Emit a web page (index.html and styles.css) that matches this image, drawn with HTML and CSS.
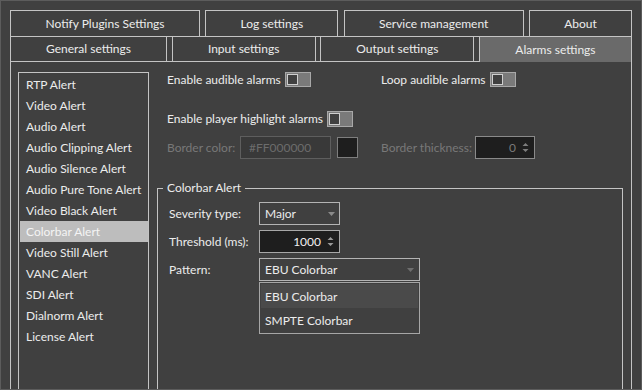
FILE: index.html
```html
<!DOCTYPE html>
<html>
<head>
<meta charset="utf-8">
<link rel="stylesheet" href="styles.css">
</head>
<body>
<div class="window">
  <div class="tabs row1">
    <div class="tab">Notify Plugins Settings</div>
    <div class="tab">Log settings</div>
    <div class="tab">Service management</div>
    <div class="tab">About</div>
  </div>
  <div class="tabs row2">
    <div class="tab">General settings</div>
    <div class="tab">Input settings</div>
    <div class="tab">Output settings</div>
    <div class="tab selected">Alarms settings</div>
  </div>
  <div class="panel">
    <ul class="alert-list">
      <li>RTP Alert</li>
      <li>Video Alert</li>
      <li>Audio Alert</li>
      <li>Audio Clipping Alert</li>
      <li>Audio Silence Alert</li>
      <li>Audio Pure Tone Alert</li>
      <li>Video Black Alert</li>
      <li class="active">Colorbar Alert</li>
      <li>Video Still Alert</li>
      <li>VANC Alert</li>
      <li>SDI Alert</li>
      <li>Dialnorm Alert</li>
      <li>License Alert</li>
    </ul>
    <div class="content">
      <div class="opts">
        <div class="opt row-a">
          <span>Enable audible alarms</span>
          <span class="toggle"><span class="knob"></span></span>
        </div>
        <div class="opt row-a">
          <span>Loop audible alarms</span>
          <span class="toggle"><span class="knob"></span></span>
        </div>
        <div class="opt row-b">
          <span>Enable player highlight alarms</span>
          <span class="toggle"><span class="knob"></span></span>
        </div>
        <div class="opt row-b"></div>
        <div class="opt row-c disabled">
          <span class="lbl-bc">Border color:</span>
          <span class="color-input">#FF000000</span>
          <span class="swatch"></span>
        </div>
        <div class="opt row-c disabled">
          <span class="lbl-bt">Border thickness:</span>
          <span class="spin spin-bt"><span class="val">0</span>
            <svg class="arrows" width="7" height="11" viewBox="0 0 7 11"><path d="M0.5 4 L3.5 1 L6.5 4 Z M0.5 7 L3.5 10 L6.5 7 Z" fill="#7d7d7d"/></svg>
          </span>
        </div>
      </div>
      <fieldset class="group">
        <legend>Colorbar Alert</legend>
        <div class="field">
          <span class="flabel">Severity type:</span>
          <span class="combo combo-sm"><span>Major</span>
            <svg class="caret" width="7" height="4" viewBox="0 0 7 4"><path d="M0 0 L7 0 L3.5 4 Z" fill="#8a8a8a"/></svg>
          </span>
        </div>
        <div class="field">
          <span class="flabel">Threshold (ms):</span>
          <span class="spin spin-th"><span class="val">1000</span>
            <svg class="arrows" width="7" height="11" viewBox="0 0 7 11"><path d="M0.5 4 L3.5 1 L6.5 4 Z M0.5 7 L3.5 10 L6.5 7 Z" fill="#9a9a9a"/></svg>
          </span>
        </div>
        <div class="field">
          <span class="flabel">Pattern:</span>
          <span class="combo combo-lg"><span>EBU Colorbar</span>
            <svg class="caret" width="7" height="4" viewBox="0 0 7 4"><path d="M0 0 L7 0 L3.5 4 Z" fill="#6e6e6e"/></svg>
            <ul class="popup">
              <li class="hover">EBU Colorbar</li>
              <li>SMPTE Colorbar</li>
            </ul>
          </span>
        </div>
      </fieldset>
    </div>
  </div>
</div>
</body>
</html>
```
FILE: styles.css
```css
html, body {
  margin: 0;
  padding: 0;
  background: #404040;
}
body {
  font-family: "Lato", "Liberation Sans", sans-serif;
  font-size: 12px;
  line-height: 16px;
  color: #ececec;
}
.window {
  width: 642px;
  height: 390px;
  box-sizing: border-box;
  border: 1px solid #5c5c5c;
  background: #404040;
  padding: 9px 9px 0 9px;
  overflow: hidden;
  display: flex;
  flex-direction: column;
}
.tabs {
  display: grid;
  justify-content: space-between;
}
.row1 {
  grid-template-columns: 190px 133px 180px 103px;
}
.row2 {
  grid-template-columns: 157px 144px 154px 153px;
  margin-top: -1px;
  height: 25px;
  align-items: start;
}
.tab {
  box-sizing: border-box;
  border: 1px solid #c4c4c4;
  display: flex;
  align-items: center;
  justify-content: center;
  background: #404040;
}
.row1 .tab {
  height: 27px;
}
.row2 .tab {
  height: 25px;
  border-bottom: none;
}
.row2 .tab.selected {
  height: 26px;
  background: #6a6a6a;
  position: relative;
  z-index: 2;
}
.panel {
  flex: 1;
  border: 1px solid #c4c4c4;
  border-bottom: none;
  display: flex;
  padding: 10px 8px 0 7px;
  min-height: 0;
}
.alert-list {
  list-style: none;
  margin: 0;
  padding: 1px 0 0 0;
  width: 131px;
  box-sizing: border-box;
  border: 1px solid #c4c4c4;
  border-bottom: none;
  flex: none;
}
.alert-list li {
  height: 21px;
  line-height: 21px;
  margin-left: 1px;
  padding-left: 6px;
  white-space: nowrap;
}
.alert-list li.active {
  background: #bdbdbd;
  color: #f4f4f4;
}
.content {
  margin-left: 8px;
  flex: 1;
  display: flex;
  flex-direction: column;
}
.opts {
  display: grid;
  grid-template-columns: 214px 1fr;
  padding-left: 10px;
}
.opt {
  display: flex;
  align-items: center;
  white-space: nowrap;
}
.row-a {
  height: 15px;
}
.row-b {
  height: 16px;
  margin-top: 24px;
}
.row-c {
  height: 23px;
  margin-top: 9px;
}
.toggle {
  width: 26px;
  height: 15px;
  box-sizing: border-box;
  border: 1px solid #a8a8a8;
  background: #7a7a7a;
  margin-left: 4px;
  padding: 1px;
  display: flex;
}
.row-b .toggle {
  height: 16px;
}
.knob {
  width: 11px;
  height: 100%;
  box-sizing: border-box;
  border: 1px solid #cfcfcf;
  background: #404040;
}
.disabled {
  color: #787878;
}
.lbl-bc {
  width: 73px;
}
.color-input {
  width: 91px;
  height: 23px;
  box-sizing: border-box;
  border: 1px solid #5e5e5e;
  background: #393939;
  color: #6c6c6c;
  padding-left: 8px;
  display: flex;
  align-items: center;
}
.swatch {
  width: 21px;
  height: 21px;
  box-sizing: border-box;
  border: 1px solid #7e7e7e;
  background: #1e1e1e;
  margin-left: 6px;
}
.lbl-bt {
  width: 94px;
}
.spin {
  height: 23px;
  box-sizing: border-box;
  border: 1px solid #a8a8a8;
  background: #1e1e1e;
  display: flex;
  align-items: center;
  justify-content: flex-end;
  color: #f0f0f0;
}
.spin .val {
  margin-right: 6px;
}
.spin .arrows {
  margin-right: 5px;
}
.spin-bt {
  width: 60px;
  border-color: #8a8a8a;
  color: #7a7a7a;
}
.spin-th {
  width: 81px;
}
.group {
  margin: 21px 0 0 0;
  padding: 6px 0 0 11px;
  border: 1px solid #c4c4c4;
  border-bottom: none;
  flex: 1;
  min-width: 0;
}
.group legend {
  padding: 0 4px 0 4px;
  margin-left: -6px;
  line-height: 16px;
  color: #ececec;
}
.field {
  display: flex;
  align-items: center;
  height: 23px;
  margin-bottom: 5px;
}
.flabel {
  width: 90px;
  white-space: nowrap;
}
.combo {
  position: relative;
  height: 23px;
  box-sizing: border-box;
  border: 1px solid #b4b4b4;
  display: flex;
  align-items: center;
  padding-left: 5px;
}
.combo .caret {
  position: absolute;
  right: 4px;
  top: 9px;
}
.combo-sm {
  width: 81px;
}
.combo-lg {
  width: 161px;
}
.combo-lg .caret {
  right: 5px;
}
.popup {
  position: absolute;
  left: -1px;
  top: 23px;
  width: 161px;
  height: 52px;
  box-sizing: border-box;
  margin: 0;
  padding: 1px;
  list-style: none;
  border: 1px solid #a6a6a6;
  background: #404040;
  z-index: 5;
}
.popup li {
  height: 24px;
  line-height: 25px;
  padding-left: 4px;
}
.popup li.hover {
  background: #4a4a4a;
}
```
